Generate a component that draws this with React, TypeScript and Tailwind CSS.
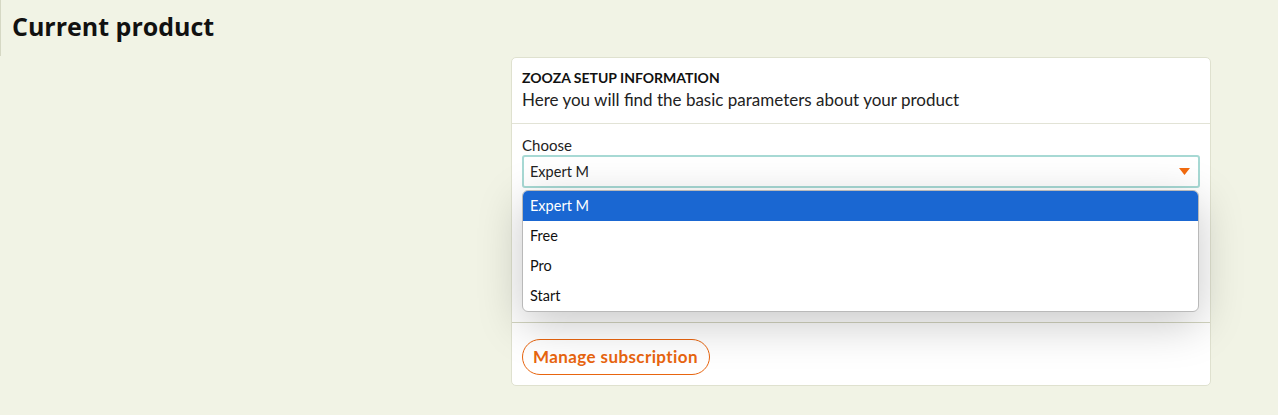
import React from "react";

export default function App() {
  const options = ["Expert M", "Free", "Pro", "Start"];
  return (
    <div className="min-h-[415px] w-full bg-[#f1f3e5] text-[#111]" style={{ fontFamily: "Lato, 'Open Sans', sans-serif" }}>
      <div className="h-[56px] border-l border-[#d6d8c4] pl-[11px] pt-[11px]">
        <h1 className="text-[25px] font-bold leading-[30px] text-[#111]" style={{ fontFamily: "'Open Sans', sans-serif" }}>Current product</h1>
      </div>
      <div className="flex">
        <div className="w-[511px] shrink-0" />
        <div className="relative mt-[1px] w-[700px] rounded-[5px] border border-[#dfe1cf] bg-white">
          <div className="px-[10px] pt-[12px] pb-[13px]">
            <div className="text-[14px] font-bold leading-[16px] text-[#111]">ZOOZA SETUP INFORMATION</div>
            <div className="mt-[4px] text-[17px] leading-[20px] text-[#222]">Here you will find the basic parameters about your product</div>
          </div>
          <div className="border-t border-[#e2e3d6] px-[10px] pt-[13px]">
            <div className="text-[15px] leading-[16px] text-[#222]">Choose</div>
            <div className="relative mt-[2px]">
              <div className="flex h-[33px] items-center justify-between rounded-[3px] border-2 border-[#a7d9d4] bg-white pl-[6px] pr-[8px] text-[14.5px] text-[#222]">
                <span>Expert M</span>
                <svg width="11" height="7" viewBox="0 0 11 7"><path d="M0 0h11L5.5 7z" fill="#f26b0f" /></svg>
              </div>
              <div className="h-[87px]" />
              <div className="h-[30px] w-[120px] rounded-full border border-[#e8650f]" />
              <div className="h-[17px]" />
              <div className="absolute left-0 top-[35px] z-10 w-[677px] overflow-hidden rounded-[6px] border border-[#b9b9b9] bg-white shadow-[0_12px_45px_rgba(0,0,0,0.22)]">
                {options.map((o, i) => (
                  <div key={o} className={`flex h-[30px] items-center px-[7px] text-[14.5px] ${i === 0 ? "bg-[#1a67d2] text-white" : "text-[#111]"}`}>{o}</div>
                ))}
              </div>
            </div>
          </div>
          <div className="border-t border-[#d3d5c0] px-[10px] pt-[16px] pb-[10px]">
            <button className="flex h-[36px] items-center rounded-full border border-[#e8650f] pl-[10px] pr-[11px] text-[17px] font-bold tracking-[0.4px] text-[#e8650f]">Manage subscription</button>
          </div>
        </div>
      </div>
    </div>
  );
}
